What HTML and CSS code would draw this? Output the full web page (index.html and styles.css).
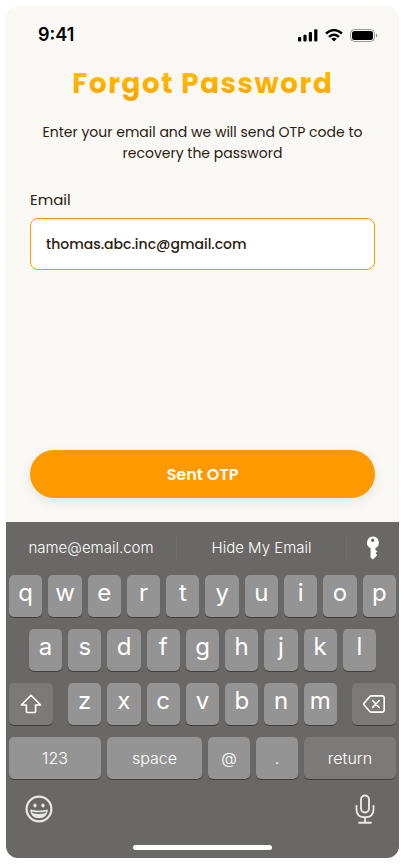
FILE: index.html
```html
<!DOCTYPE html>
<html lang="en">
<head>
<meta charset="utf-8">
<meta name="viewport" content="width=device-width, initial-scale=1">
<title>Forgot Password</title>
<link rel="stylesheet" href="styles.css">
</head>
<body>
<div class="phone">
  <header class="status">
    <time class="clock">9:41</time>
    <div class="indicators">
      <svg width="20" height="13" viewBox="0 0 20 13" fill="#000" aria-hidden="true"><rect x="0" y="8" width="3.2" height="4.500" rx="1"/><rect x="5.400" y="5.700" width="3.200" height="6.800" rx="1"/><rect x="10.800" y="3" width="3.200" height="9.500" rx="1"/><rect x="16.200" y=".3" width="3.200" height="12.200" rx="1"/></svg>
      <svg width="18" height="13" viewBox="0 0 18 13" fill="none" stroke="#000" stroke-width="2.400" aria-hidden="true"><path d="M1 4.500Q9-2.300 17 4.500"/><path d="M4 7.800Q9 3.600 14 7.800"/><path d="M9 12.600 6.200 9.800Q9 7.500 11.800 9.800Z" fill="#000" stroke="none"/></svg>
      <svg width="28" height="13" viewBox="0 0 28 13" aria-hidden="true"><rect x=".5" y=".5" width="24" height="12" rx="4" fill="none" stroke="#000" stroke-opacity=".38"/><rect x="2" y="2" width="21" height="9" rx="2.500"/><path d="M26 4.500v4q1.400-.6 1.400-2t-1.400-2" fill-opacity=".4"/></svg>
    </div>
  </header>
  <main class="content">
    <h1 class="title">Forgot Password</h1>
    <p class="intro">Enter your email and we will send OTP code to recovery the password</p>
    <form class="form">
      <label class="label" for="email">Email</label>
      <input class="field" id="email" type="email" value="thomas.abc.inc@gmail.com">
      <button class="submit" type="button">Sent OTP</button>
    </form>
  </main>
  <section class="keyboard" aria-label="Keyboard">
    <div class="suggestions">
      <button class="suggestion" type="button">name@email.com</button>
      <button class="suggestion" type="button">Hide My Email</button>
      <button class="suggestion" type="button" aria-label="Passwords">
        <svg width="14" height="24" viewBox="0 0 14 24" fill="#fff" aria-hidden="true"><path fill-rule="evenodd" d="M6.700.5a6.200 6.200 0 0 1 2.600 11.800v1.300l1.900 1.800-1.700 1.900 1.700 1.800-1.900 1.900v.6L6.700 23.400 4.600 21.500v-9.200A6.200 6.200 0 0 1 6.700.5Zm0 2.100a1.700 1.700 0 1 0 0 3.400 1.700 1.700 0 0 0 0-3.400Z"/></svg>
      </button>
    </div>
    <div class="keys">
      <div class="row"><button class="key" type="button">q</button><button class="key" type="button">w</button><button class="key" type="button">e</button><button class="key" type="button">r</button><button class="key" type="button">t</button><button class="key" type="button">y</button><button class="key" type="button">u</button><button class="key" type="button">i</button><button class="key" type="button">o</button><button class="key" type="button">p</button></div>
      <div class="row row-inset"><button class="key" type="button">a</button><button class="key" type="button">s</button><button class="key" type="button">d</button><button class="key" type="button">f</button><button class="key" type="button">g</button><button class="key" type="button">h</button><button class="key" type="button">j</button><button class="key" type="button">k</button><button class="key" type="button">l</button></div>
      <div class="row row-shift">
        <button class="key key-dark key-side" type="button" aria-label="Shift"><svg width="22" height="20" viewBox="0 0 22 20" fill="none" stroke="#fff" stroke-width="1.600" stroke-linejoin="round" aria-hidden="true"><path d="M11 1.200 20.600 11H15.600v6.500q0 1-1 1H7.400q-1 0-1-1V11H1.400Z"/></svg></button>
        <div class="row row-letters"><button class="key" type="button">z</button><button class="key" type="button">x</button><button class="key" type="button">c</button><button class="key" type="button">v</button><button class="key" type="button">b</button><button class="key" type="button">n</button><button class="key" type="button">m</button></div>
        <button class="key key-dark key-side" type="button" aria-label="Delete"><svg width="22" height="18" viewBox="0 0 22 18" fill="none" stroke="#fff" stroke-width="1.600" stroke-linejoin="round" stroke-linecap="round" aria-hidden="true"><path d="M8.300.9H19q2.200 0 2.200 2.200v11.800q0 2.200-2.200 2.200H8.300q-.9 0-1.500-.7L1.200 10q-.8-1 0-2L6.800 1.600Q7.400.9 8.300.9Z"/><path d="m9.600 5.500 6.600 7M16.200 5.500l-6.600 7"/></svg></button>
      </div>
      <div class="row row-bottom"><button class="key key-word" type="button">123</button><button class="key key-word" type="button">space</button><button class="key key-word" type="button">@</button><button class="key key-word" type="button">.</button><button class="key key-word key-dark" type="button">return</button></div>
    </div>
    <div class="tools">
      <button class="tool" type="button" aria-label="Emoji"><svg width="28" height="28" viewBox="0 0 28 28" fill="#e8e8e7" aria-hidden="true"><circle cx="14" cy="14" r="12.400" fill="none" stroke="#e8e8e7" stroke-width="2.200"/><ellipse cx="10" cy="10.500" rx="1.600" ry="2"/><ellipse cx="18" cy="10.500" rx="1.600" ry="2"/><path fill-rule="evenodd" d="M5.200 14.500q8.800 2.300 17.600 0-.3 8.700-8.800 8.700t-8.800-8.700Zm1.700 1.900q7.100 1.800 14.200 0l-.6 1.600q-6.500 1.800-13 0Z"/></svg></button>
      <button class="tool" type="button" aria-label="Dictation"><svg width="22" height="30" viewBox="0 0 22 30" fill="none" stroke="#e8e8e7" stroke-width="1.900" stroke-linecap="round" aria-hidden="true"><rect x="7" y="1.500" width="8" height="17" rx="4"/><path d="M2.500 12v3.500q0 7.800 8.500 7.800t8.500-7.800V12M11 23.300v5M5 28.700h12"/></svg></button>
    </div>
    <div class="home"></div>
  </section>
</div>
</body>
</html>
```
FILE: styles.css
```css
* { box-sizing: border-box; }
body { margin: 0; background: #fff; color: #2a200f; font-family: Poppins, Inter, sans-serif; }
button, input { font: inherit; }
button { border: 0; padding: 0; background: none; color: inherit; }
.phone {
  display: flex; flex-direction: column;
  min-height: calc(100vh - 12px); margin: 6px;
  background: #faf8f5; border-radius: 12px; overflow: hidden;
}
.status { display: flex; justify-content: space-between; align-items: center; padding: 18px 21px 0 32px; }
.clock { font: 600 18px/22px Inter, sans-serif; color: #000; }
.indicators { display: flex; align-items: center; gap: 7px; }
.content { flex: 1; display: flex; flex-direction: column; padding: 16px 24px 24px; }
.title {
  align-self: center; margin: 0;
  font-size: 28px; line-height: 44px; font-weight: 700; letter-spacing: .05em;
  background: linear-gradient(#ffc800, #ff9900); background-clip: text; -webkit-background-clip: text; color: transparent;
}
.intro { margin: 16px 0 0; font-size: 14px; line-height: 21px; text-align: center; }
.form { flex: 1; display: flex; flex-direction: column; margin-top: 24px; }
.label { font-size: 15px; line-height: 24px; }
.field {
  width: 100%; height: 52px; margin-top: 6px; padding: 0 15px;
  border: 1px solid #f90; border-radius: 8px; background: #fff; color: #2a200f;
  font-size: 14px; font-weight: 500; outline: 0;
}
.submit {
  height: 48px; margin-top: auto; border-radius: 24px; background: #f90; color: #fff;
  font-size: 16px; font-weight: 600; box-shadow: 0 4px 12px rgba(0, 0, 0, .08);
}
.keyboard { background: #696866; color: #fff; font-family: Inter, sans-serif; padding-bottom: 8px; }
.suggestions { display: grid; grid-template-columns: 170fr 170fr 53fr; padding: 13px 0 15px; }
.suggestion { height: 25px; font-size: 15px; font-weight: 300; display: flex; align-items: center; justify-content: center; }
.suggestion + .suggestion { border-left: 1px solid #70706e; }
.keys { display: flex; flex-direction: column; gap: 12px; padding: 0 3px; }
.row { display: flex; gap: 6px; }
.row-inset { padding: 0 20px; }
.row-shift { gap: 15px; }
.row-letters { flex: 1; }
.key {
  flex: 1; min-width: 0; height: 42px; padding-bottom: 6px; border-radius: 5px; background: #949494;
  box-shadow: 0 1px 0 #3e3e3d; font-size: 24px; line-height: 28px;
}
.key-dark { background: #7b7a78; }
.key-side { flex: 0 0 44px; display: flex; align-items: center; justify-content: center; padding: 0; }
.row-bottom { display: grid; grid-template-columns: 92fr 95fr 42fr 42fr 92fr; }
.key-word { font-size: 16px; font-weight: 300; padding: 0; }
.tools { display: flex; justify-content: space-between; align-items: center; padding: 15px 23px 0 19px; }
.tool { display: flex; }
.home { width: 139px; height: 5px; margin: 21px auto 0; border-radius: 3px; background: #fff; }
```
